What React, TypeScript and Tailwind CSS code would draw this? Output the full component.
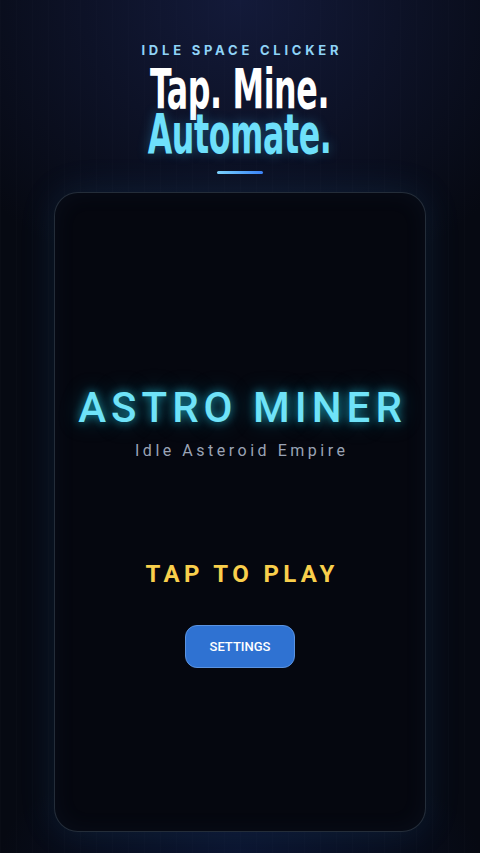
import React from "react";

export default function App() {
  return (
    <div
      className="relative w-[480px] h-[853px] overflow-hidden flex flex-col items-center bg-[#060912]"
      style={{
        backgroundImage:
          "radial-gradient(ellipse 70% 35% at 50% 0%, rgba(30,40,90,0.55), rgba(0,0,0,0) 100%), radial-gradient(ellipse 50% 12% at 50% 100%, rgba(20,40,100,0.35), rgba(0,0,0,0) 100%), linear-gradient(90deg, rgba(255,255,255,0.012) 1px, transparent 1px)",
        backgroundSize: "100% 100%, 100% 100%, 16px 16px",
      }}
    >
      <div className="pt-[43px] text-[13px] leading-[14px] font-bold tracking-[0.29em] text-[#8fd3f7] pl-[0.29em] font-['Inter',sans-serif]">
        IDLE SPACE CLICKER
      </div>
      <div
        className="mt-[10px] flex flex-col items-center font-['DejaVu_Sans_Condensed',sans-serif] font-bold text-[55px] leading-[45px] tracking-[-0.01em]"
        style={{ transform: "scaleX(0.64)" }}
      >
        <span className="text-white">Tap. Mine.</span>
        <span className="text-[#6ee0fb]" style={{ textShadow: "0 0 14px rgba(56,189,248,0.35)" }}>
          Automate.
        </span>
      </div>
      <div className="mt-[14px] w-[46px] h-[3px] rounded-full bg-gradient-to-r from-[#7dd3fc] to-[#3b82f6]" />
      <div
        className="mt-[18px] w-[372px] h-[640px] rounded-[24px] border border-[rgba(148,180,210,0.22)] bg-[#05070f] flex flex-col items-center"
        style={{
          boxShadow:
            "0 0 36px rgba(56,140,220,0.14), inset 0 0 24px rgba(80,140,200,0.06)",
        }}
      >
        <div
          className="mt-[191px] text-[42px] leading-[48px] font-medium tracking-[0.12em] pl-[0.12em] text-[#6fe3f8] font-['Roboto',sans-serif]"
          style={{ textShadow: "0 0 10px rgba(34,211,238,0.65), 0 0 22px rgba(34,211,238,0.35)" }}
        >
          ASTRO MINER
        </div>
        <div className="mt-[9px] text-[16px] leading-[20px] tracking-[0.22em] pl-[0.22em] text-[#9aa3b5] font-['Roboto',sans-serif]">
          Idle Asteroid Empire
        </div>
        <div className="mt-[99px] text-[24px] leading-[28px] font-bold tracking-[0.18em] pl-[0.18em] text-[#f9cf4c] font-['Roboto',sans-serif]">
          TAP TO PLAY
        </div>
        <button className="mt-[37px] w-[110px] h-[43px] rounded-[12px] bg-[#2f72d2] border border-[#5b93e0] text-white text-[13px] font-medium font-['Roboto',sans-serif]">
          SETTINGS
        </button>
      </div>
    </div>
  );
}
